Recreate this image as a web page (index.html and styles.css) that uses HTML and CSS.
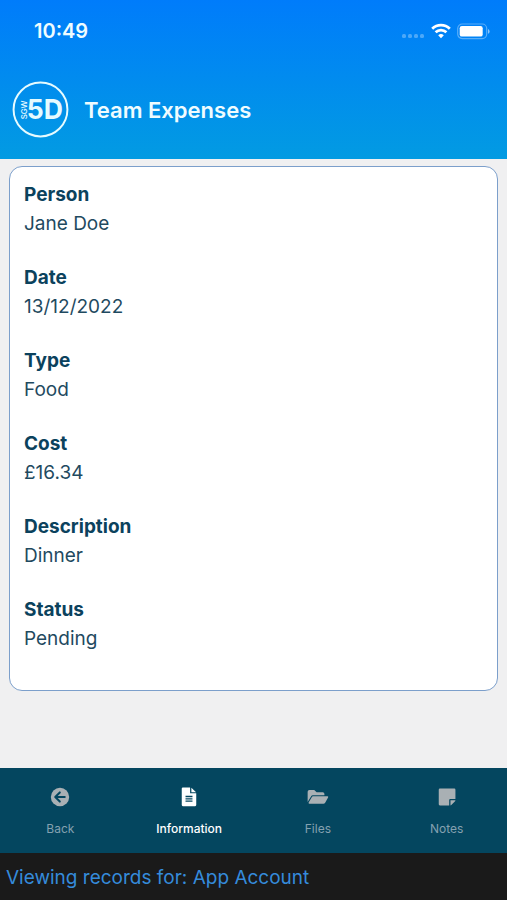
FILE: index.html
```html
<!DOCTYPE html>
<html lang="en">
<head>
<meta charset="utf-8">
<meta name="viewport" content="width=device-width, initial-scale=1">
<title>Team Expenses</title>
<link rel="stylesheet" href="styles.css">
</head>
<body>
<header class="header">
  <div class="status-bar">
    <time class="clock">10:49</time>
    <div class="indicators">
      <svg class="signal" width="24" height="6" viewBox="0 0 24 6" aria-hidden="true">
        <rect x="1" y="1" width="4" height="4" rx="1.5"/><rect x="7" y="1" width="4" height="4" rx="1.500"/><rect x="13" y="1" width="4" height="4" rx="1.5"/><rect x="19" y="1" width="4" height="4" rx="1.5"/>
      </svg>
      <svg width="20" height="16" viewBox="0 0 20 16" fill="none" stroke="#fff" stroke-width="2.8" aria-hidden="true">
        <path d="M1.2 5.7a12.6 12.6 0 0 1 17.6 0"/>
        <path d="M4.6 9.3a7.8 7.8 0 0 1 10.8 0"/>
        <path d="M10 15.3 7.2 12.3a4 4 0 0 1 5.6 0z" fill="#fff" stroke="none"/>
      </svg>
      <svg width="33" height="17" viewBox="0 0 33 17" aria-hidden="true">
        <rect x=".7" y="1" width="29" height="14.6" rx="4.5" fill="none" stroke="#fff" stroke-opacity=".35" stroke-width="1.2"/>
        <rect x="2.7" y="3" width="23" height="10.6" rx="2.2" fill="#fff"/>
        <path d="M31 6v4.8q1.6-.7 1.6-2.4T31 6z" fill="#fff" fill-opacity=".55"/>
      </svg>
    </div>
  </div>
  <div class="title-bar">
    <svg class="logo" viewBox="0 0 58 58" role="img" aria-label="SGW 5D">
      <circle cx="29" cy="29" r="27.4" fill="none" stroke="#e6fbff" stroke-width="2"/>
      <text class="logo-side" transform="translate(15 39) rotate(-90)">SGW</text>
      <text class="logo-main" x="15" y="39">5D</text>
    </svg>
    <h1 class="title">Team Expenses</h1>
  </div>
</header>

<main class="content">
  <dl class="card">
    <div class="field"><dt>Person</dt><dd>Jane Doe</dd></div>
    <div class="field"><dt>Date</dt><dd>13/12/2022</dd></div>
    <div class="field"><dt>Type</dt><dd>Food</dd></div>
    <div class="field"><dt>Cost</dt><dd>£16.34</dd></div>
    <div class="field"><dt>Description</dt><dd>Dinner</dd></div>
    <div class="field"><dt>Status</dt><dd>Pending</dd></div>
  </dl>
</main>

<nav class="tabs">
  <button class="tab" type="button">
    <svg viewBox="0 0 24 24" aria-hidden="true"><circle cx="12" cy="12" r="10" fill="currentColor"/><path d="M17.2 12H7.4M11.8 7 6.8 12l5 5" fill="none" stroke="#04465f" stroke-width="2.2" stroke-linecap="round" stroke-linejoin="round"/></svg>
    <span>Back</span>
  </button>
  <button class="tab active" type="button" aria-current="page">
    <svg viewBox="0 0 24 24" aria-hidden="true"><path d="M5.300 1.600h7.900v6.400h6.700v12.800q0 1.200-1.200 1.200H5.300q-1.200 0-1.200-1.200V2.800q0-1.200 1.200-1.200z" fill="currentColor"/><path d="M14.600 1.800v4.900h5.100z" fill="currentColor"/><path d="M8.2 11.500h7.600M8.2 14h7.600M8.2 16.500h7.600" stroke="#04465f" stroke-width="1.5"/></svg>
    <span>Information</span>
  </button>
  <button class="tab" type="button">
    <svg viewBox="0 0 24 24" aria-hidden="true"><path d="M.7 17.5V6.200q0-1.900 1.900-1.900h5.300l2.600 2.500h6.700q1.800 0 1.800 1.800v1.600H6.400q-1.300 0-2 1.200z" fill="currentColor"/><path d="M6.700 11.300h15.500q1.400 0 .8 1.200l-3.200 5.700q-.6 1.100-1.900 1.100H2.500q-1.300 0-.7-1.200l3.200-5.600q.6-1.200 1.700-1.200z" fill="currentColor"/></svg>
    <span>Files</span>
  </button>
  <button class="tab" type="button">
    <svg viewBox="0 0 24 24" aria-hidden="true"><path d="M4.200 2.800h15.800q1.200 0 1.200 1.200v10.200h-5.600q-1.200 0-1.200 1.200v5.800H4.200q-1.200 0-1.200-1.200V4q0-1.200 1.200-1.200z" fill="currentColor"/><path d="M15.800 15.600h5.400q0 .5-.4.900l-4.100 4.200q-.4.400-.9.500z" fill="currentColor"/></svg>
    <span>Notes</span>
  </button>
</nav>
<footer class="account">Viewing records for: App Account</footer>
</body>
</html>
```

FILE: styles.css
```css
* {
  box-sizing: border-box;
}

body {
  margin: 0;
  min-height: 100vh;
  display: flex;
  flex-direction: column;
  background: #f0f0f1;
  color: #1f4a60;
  font-family: Inter, "Liberation Sans", sans-serif;
  font-size: 19px;
}

.header {
  background: linear-gradient(#007cfb, #029be2);
  color: #effcff;
  padding-bottom: 20px;
}

.status-bar {
  display: flex;
  align-items: center;
  justify-content: space-between;
  height: 62px;
  padding: 0 17px 0 34px;
}

.clock {
  font-size: 20px;
  font-weight: 600;
}

.indicators {
  display: flex;
  align-items: center;
  gap: 6px;
}

.signal {
  fill: #fff;
  fill-opacity: 0.3;
  margin-top: 10px;
}

.title-bar {
  display: flex;
  align-items: center;
  gap: 15px;
  height: 77px;
  padding: 18px 12px 0;
}

.logo {
  width: 57px;
  height: 57px;
  fill: #e6fbff;
}

.logo-main {
  font-size: 27px;
  font-weight: 700;
}

.logo-side {
  font-size: 8px;
  font-weight: 500;
}

.title {
  margin: 0;
  font-size: 22px;
  font-weight: 600;
}

.content {
  flex: 1;
  padding: 7px 9px 24px;
}

.card {
  margin: 0;
  padding: 13px 14px 12px;
  background: #fff;
  border: 1px solid #7c9fcb;
  border-radius: 13px;
}

.field {
  padding-bottom: 25px;
  line-height: 29px;
}

.field dt {
  color: #0b425d;
  font-weight: 700;
}

.field dd {
  margin: 0;
}

.tabs {
  display: flex;
  justify-content: center;
  padding: 0 0 15px;
  background: #04465f;
}

.tab {
  flex: 0 0 calc(25% + 2px);
  display: flex;
  flex-direction: column;
  align-items: center;
  gap: 12px;
  padding: 18px 0 0;
  border: 0;
  background: none;
  color: #a9b0b4;
  font: 12px/18px Inter, "Liberation Sans", sans-serif;
  cursor: pointer;
}

.tab span {
  color: #84a1b0;
}

.tab svg {
  width: 22px;
  height: 22px;
}

.tab.active,
.tab.active span {
  color: #fff;
  font-weight: 500;
}

.account {
  padding: 10px 6px 7px;
  background: #1a1a1a;
  color: #358bdb;
  line-height: 30px;
}
```
